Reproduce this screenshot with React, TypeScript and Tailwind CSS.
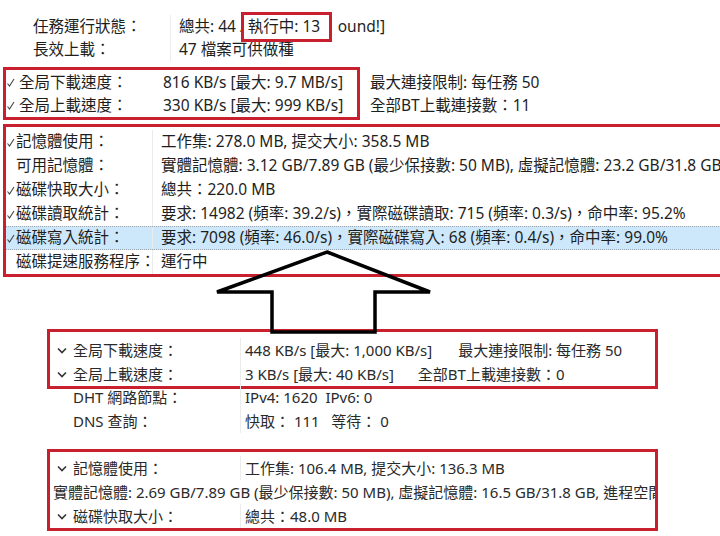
import React from 'react';

const font = { fontFamily: '"Noto Sans", "Noto Sans CJK TC", sans-serif' };

const Tick = () => (
  <svg width="8" height="9" viewBox="0 0 8 9" className="shrink-0">
    <path d="M0.5 5.5 L2.5 8 L7 1" fill="none" stroke="#444" strokeWidth="1.1" />
  </svg>
);

const Chevron = () => (
  <svg width="10" height="7" viewBox="0 0 10 7" className="shrink-0">
    <path d="M1 1.5 L5 5.5 L9 1.5" fill="none" stroke="#333" strokeWidth="1.6" />
  </svg>
);

interface IRow {
  label: string;
  value: string;
  tick?: boolean;
  active?: boolean;
}

const memRows: IRow[] = [
  { label: '記憶體使用：', value: '工作集: 278.0 MB, 提交大小: 358.5 MB', tick: true },
  {
    label: '可用記憶體：',
    value: '實體記憶體: 3.12 GB/7.89 GB (最少保接數: 50 MB), 虛擬記憶體: 23.2 GB/31.8 GB, 進程空間',
  },
  { label: '磁碟快取大小：', value: '總共：220.0 MB', tick: true },
  {
    label: '磁碟讀取統計：',
    value: '要求: 14982 (頻率: 39.2/s)，實際磁碟讀取: 715 (頻率: 0.3/s)，命中率: 95.2%',
    tick: true,
  },
  {
    label: '磁碟寫入統計：',
    value: '要求: 7098 (頻率: 46.0/s)，實際磁碟寫入: 68 (頻率: 0.4/s)，命中率: 99.0%',
    tick: true,
    active: true,
  },
  { label: '磁碟提速服務程序：', value: '運行中' },
];

const App = () => {
  return (
    <div
      className="relative h-[536px] w-[720px] overflow-hidden bg-white text-[#1e1e1e]"
      style={font}
    >
      {/* top screenshot */}
      <div className="pt-[15px] text-[15.5px]">
        <div className="flex h-[23px] items-center whitespace-nowrap">
          <div className="w-[170px] shrink-0 pl-[33px]">任務運行狀態：</div>
          <div className="flex h-full items-center border-l border-[#ececec] pl-[8px]">
            <span>總共: 44 /</span>
            <span className="relative -ml-[5px] inline-flex h-[30px] w-[91px] items-center border-[3px] border-[#c8202f] bg-white pl-[4px]">
              執行中: 13
            </span>
            <span className="ml-[6px]">ound!]</span>
          </div>
        </div>
        <div className="flex h-[23px] items-center whitespace-nowrap">
          <div className="w-[170px] shrink-0 pl-[33px]">長效上載：</div>
          <div className="flex h-full items-center border-l border-[#ececec] pl-[8px]">47 檔案可供做種</div>
        </div>

        <div className="mt-[6px] flex items-start whitespace-nowrap">
          <div className="ml-[3px] w-[357px] shrink-0 border-[3px] border-[#c8202f] pt-[1px]">
            <div className="flex h-[23px] items-center">
              <div className="flex w-[157px] shrink-0 items-center gap-[4px] pl-[1px]">
                <Tick />
                全局下載速度：
              </div>
              <div>816 KB/s [最大: 9.7 MB/s]</div>
            </div>
            <div className="flex h-[23px] items-center">
              <div className="flex w-[157px] shrink-0 items-center gap-[4px] pl-[1px]">
                <Tick />
                全局上載速度：
              </div>
              <div>330 KB/s [最大: 999 KB/s]</div>
            </div>
          </div>
          <div className="ml-[10px] pt-[4px]">
            <div className="flex h-[23px] items-center">最大連接限制: 每任務 50</div>
            <div className="flex h-[23px] items-center">全部BT上載連接數：11</div>
          </div>
        </div>

        <div className="ml-[3px] mt-[4px] w-[720px] border-y-[3px] border-l-[3px] border-[#c8202f] pt-[3px] whitespace-nowrap">
          {memRows.map((r) => (
            <div
              key={r.label}
              className={
                r.active
                  ? 'flex h-[24px] items-center border-y border-dotted border-[#9aa7b3] bg-[#cde8fb]'
                  : 'flex h-[24px] items-center'
              }
            >
              <div className="flex w-[146px] shrink-0 items-center">
                <span className="w-[10px] shrink-0 pl-[1px]">{r.tick && <Tick />}</span>
                {r.label}
              </div>
              <div className="flex h-full items-center border-l border-[#ececec] pl-[8px]">{r.value}</div>
            </div>
          ))}
        </div>
      </div>

      {/* bottom screenshot */}
      <div className="mt-[52px] whitespace-nowrap text-[15px] text-[#2a2a2a]">
        <div className="ml-[47px] w-[611px] border-[3px] border-[#c8202f] pt-[6px]">
          <div className="flex h-[24px] items-center">
            <div className="flex w-[190px] shrink-0 items-center gap-[6px] pl-[7px]">
              <Chevron />
              全局下載速度：
            </div>
            <div className="flex h-full items-center border-l border-[#ececec] pl-[4px]">
              448 KB/s [最大: 1,000 KB/s]
              <span className="ml-[26px]">最大連接限制: 每任務 50</span>
            </div>
          </div>
          <div className="flex h-[24px] items-center">
            <div className="flex w-[190px] shrink-0 items-center gap-[6px] pl-[7px]">
              <Chevron />
              全局上載速度：
            </div>
            <div className="flex h-full items-center border-l border-[#ececec] pl-[4px]">
              3 KB/s [最大: 40 KB/s]
              <span className="ml-[24px]">全部BT上載連接數：0</span>
            </div>
          </div>
        </div>

        <div className="-mt-[4px] ml-[50px]">
          <div className="flex h-[24px] items-center">
            <div className="w-[190px] shrink-0 pl-[23px]">DHT 網路節點：</div>
            <div className="flex h-full items-center border-l border-[#ececec] pl-[4px]">IPv4: 1620&nbsp; IPv6: 0</div>
          </div>
          <div className="flex h-[24px] items-center">
            <div className="w-[190px] shrink-0 pl-[23px]">DNS 查詢：</div>
            <div className="flex h-full items-center border-l border-[#ececec] pl-[4px]">
              快取： 111&nbsp;&nbsp; 等待： 0
            </div>
          </div>
        </div>

        <div className="ml-[47px] mt-[16px] w-[611px] overflow-hidden border-[3px] border-[#c8202f] pt-[4px]">
          <div className="flex h-[24px] items-center">
            <div className="flex w-[190px] shrink-0 items-center gap-[6px] pl-[7px]">
              <Chevron />
              記憶體使用：
            </div>
            <div className="flex h-full items-center border-l border-[#ececec] pl-[4px]">
              工作集: 106.4 MB, 提交大小: 136.3 MB
            </div>
          </div>
          <div className="flex h-[24px] items-center pl-[3px]">
            實體記憶體: 2.69 GB/7.89 GB (最少保接數: 50 MB), 虛擬記憶體: 16.5 GB/31.8 GB, 進程空間: 2.1 GB
          </div>
          <div className="flex h-[24px] items-center">
            <div className="flex w-[190px] shrink-0 items-center gap-[6px] pl-[7px]">
              <Chevron />
              磁碟快取大小：
            </div>
            <div className="flex h-full items-center border-l border-[#ececec] pl-[4px]">總共：48.0 MB</div>
          </div>
        </div>
        <div className="ml-[50px] flex h-[24px] items-center">
          <div className="w-[190px] shrink-0 pl-[23px]">磁碟讀取統計：</div>
          <div className="pl-[5px]">要求: 0 (頻率: 0.0/s)，實際磁碟讀取: 0</div>
        </div>
      </div>

      {/* arrow drawn over both screenshots */}
      <svg className="pointer-events-none absolute left-0 top-0" width="720" height="536" viewBox="0 0 720 536">
        <polygon
          points="327,252 430,292 375,292 375,332 272,332 272,292 217,292"
          fill="none"
          stroke="#000"
          strokeWidth="3.5"
          strokeLinejoin="miter"
        />
      </svg>
    </div>
  );
};

export default App;
